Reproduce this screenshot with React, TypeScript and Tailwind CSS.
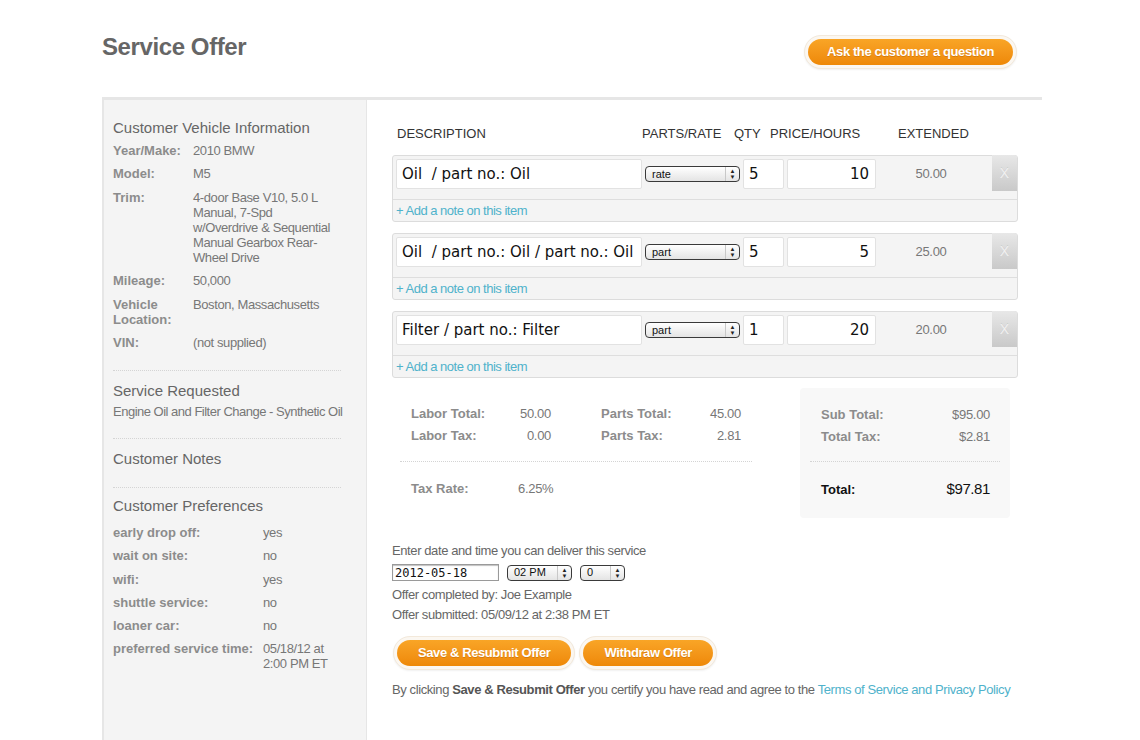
import React from 'react';

const font = { fontFamily: '"Liberation Sans", Arial, sans-serif' };
const inputFont = { fontFamily: '"DejaVu Sans", Verdana, sans-serif' };

const vehicleRows: { label: string; value: string[] }[] = [
  { label: 'Year/Make:', value: ['2010 BMW'] },
  { label: 'Model:', value: ['M5'] },
  { label: 'Trim:', value: ['4-door Base V10, 5.0 L', 'Manual, 7-Spd', 'w/Overdrive & Sequential', 'Manual Gearbox Rear-', 'Wheel Drive'] },
  { label: 'Mileage:', value: ['50,000'] },
  { label: 'Vehicle Location:', value: ['Boston, Massachusetts'] },
  { label: 'VIN:', value: ['(not supplied)'] },
];

const prefs: { label: string; value: string[] }[] = [
  { label: 'early drop off:', value: ['yes'] },
  { label: 'wait on site:', value: ['no'] },
  { label: 'wifi:', value: ['yes'] },
  { label: 'shuttle service:', value: ['no'] },
  { label: 'loaner car:', value: ['no'] },
  { label: 'preferred service time:', value: ['05/18/12 at', '2:00 PM ET'] },
];

const items = [
  { desc: 'Oil  / part no.: Oil', type: 'rate', qty: '5', price: '10', ext: '50.00' },
  { desc: 'Oil  / part no.: Oil / part no.: Oil', type: 'part', qty: '5', price: '5', ext: '25.00' },
  { desc: 'Filter / part no.: Filter', type: 'part', qty: '1', price: '20', ext: '20.00' },
];

const OrangeButton: React.FC<{ label: string; className?: string; pad?: string }> = ({ label, className = '', pad = 'px-[19px]' }) => (
  <div className={`inline-flex rounded-full bg-[#fbf7f1] p-[3px] border border-[#f3e9db] shadow-[0_1px_2px_rgba(0,0,0,0.06)] ${className}`}>
    <button
      className={`h-[26px] rounded-full bg-gradient-to-b from-[#f9a526] to-[#ee8806] ${pad} text-[13px] font-bold tracking-[-0.4px] text-white [text-shadow:0_1px_0_rgba(160,80,0,0.35)]`}
      style={font}
    >
      {label}
    </button>
  </div>
);

const MacSelect: React.FC<{ value: string; width: string }> = ({ value, width }) => (
  <div
    className={`flex h-[16px] items-center rounded-[4px] border border-[#3a3a3a] bg-gradient-to-b from-white to-[#e4e4e4] ${width}`}
  >
    <span className="flex-1 pl-[6px] text-[11px] leading-none text-[#111]">{value}</span>
    <span className="flex h-full w-[14px] flex-col items-center justify-center border-l border-[#c8c8c8] text-[6px] leading-[6px] text-[#222]">
      <span>▲</span>
      <span>▼</span>
    </span>
  </div>
);

const InfoRow: React.FC<{ label: string; value: string[]; labelWidth: string }> = ({ label, value, labelWidth }) => (
  <div className="flex text-[13px] leading-[15px]">
    <div className={`${labelWidth} shrink-0 pr-2 font-bold text-[#8c8c8c]`}>{label}</div>
    <div className="tracking-[-0.4px] text-[#777]">
      {value.map((v) => (
        <div key={v}>{v}</div>
      ))}
    </div>
  </div>
);

const Dotted: React.FC<{ className?: string }> = ({ className = '' }) => (
  <div className={`border-t border-dotted border-[#d4d4d4] ${className}`} />
);

export default function App() {
  return (
    <div className="h-[740px] w-full overflow-hidden bg-white" style={font}>
      <div className="ml-[102px] w-[940px]">
        {/* Header */}
        <div className="flex h-[97px] items-start justify-between">
          <h1 className="mt-[33px] text-[24px] font-bold leading-[28px] tracking-[-0.4px] text-[#666]">Service Offer</h1>
          <OrangeButton label="Ask the customer a question" className="mr-[25px] mt-[35px]" />
        </div>

        <div className="flex h-[643px] border-t-[3px] border-[#e6e6e6]">
          {/* Sidebar */}
          <aside className="w-[265px] shrink-0 border-l-2 border-r border-[#e6e6e6] bg-[#f4f4f4] pl-[9px] pr-[25px] pt-[18px]">
            <h2 className="text-[15px] leading-[20px] text-[#666]">Customer Vehicle Information</h2>
            <div className="mt-[5px] flex flex-col gap-[8.4px]">
              {vehicleRows.map((r) => (
                <InfoRow key={r.label} label={r.label} value={r.value} labelWidth="w-[80px]" />
              ))}
            </div>
            <Dotted className="mt-[20px]" />
            <h2 className="mt-[10px] text-[15px] leading-[20px] text-[#666]">Service Requested</h2>
            <div className="mt-[3px] whitespace-nowrap text-[13px] leading-[15px] tracking-[-0.5px] text-[#777]">
              Engine Oil and Filter Change - Synthetic Oil
            </div>
            <Dotted className="mt-[19px]" />
            <h2 className="mt-[10px] text-[15px] leading-[20px] text-[#666]">Customer Notes</h2>
            <Dotted className="mt-[18px]" />
            <h2 className="mt-[8px] text-[15px] leading-[20px] text-[#666]">Customer Preferences</h2>
            <div className="mt-[9px] flex flex-col gap-[8.3px]">
              {prefs.map((r) => (
                <InfoRow key={r.label} label={r.label} value={r.value} labelWidth="w-[150px]" />
              ))}
            </div>
          </aside>

          {/* Main */}
          <main className="flex-1 pl-[25px] pr-[24px] pt-[26px]">
            <div className="flex text-[13px] leading-[16px] text-[#333]">
              <span className="w-[250px] pl-[5px]">DESCRIPTION</span>
              <span className="w-[92px]">PARTS/RATE</span>
              <span className="w-[36px]">QTY</span>
              <span className="w-[128px]">PRICE/HOURS</span>
              <span>EXTENDED</span>
            </div>

            <div className="mt-[13px] flex flex-col gap-[11px]">
              {items.map((it, i) => (
                <div key={i} className="h-[67px] rounded-[3px] border border-[#dcdcdc] bg-[#f4f4f4]">
                  <div className="flex h-[44px] items-start border-b border-[#dedede]">
                    <div
                      className="ml-[3px] mt-[3px] flex h-[30px] w-[246px] items-center overflow-hidden whitespace-pre rounded-[2px] border border-[#e2e2e2] bg-white pl-[5px] text-[15px] text-[#111]"
                      style={inputFont}
                    >
                      {it.desc}
                    </div>
                    <div className="ml-[3px] mt-[10px]">
                      <MacSelect value={it.type} width="w-[95px]" />
                    </div>
                    <div
                      className="ml-[3px] mt-[3px] flex h-[30px] w-[41px] items-center rounded-[2px] border border-[#e2e2e2] bg-white pl-[5px] text-[15px] text-[#111]"
                      style={inputFont}
                    >
                      {it.qty}
                    </div>
                    <div
                      className="ml-[3px] mt-[3px] flex h-[30px] w-[89px] items-center justify-end rounded-[2px] border border-[#e2e2e2] bg-white pr-[6px] text-[15px] text-[#111]"
                      style={inputFont}
                    >
                      {it.price}
                    </div>
                    <div className="flex h-[36px] flex-1 items-center justify-center pr-[6px] text-[13px] tracking-[-0.3px] text-[#777]">
                      {it.ext}
                    </div>
                    <div className="-mt-px flex h-[36px] w-[25px] items-center justify-center rounded-tr-[3px] bg-gradient-to-b from-[#e8e8e8] to-[#c9c9c9] text-[14px] font-light text-[#f0f0f0] [text-shadow:0_-1px_0_rgba(0,0,0,0.08)]">
                      X
                    </div>
                  </div>
                  <div className="flex h-[22px] items-center pl-[3px] text-[13px] tracking-[-0.5px] text-[#4fb2cb]">
                    + Add a note on this item
                  </div>
                </div>
              ))}
            </div>

            {/* Totals */}
            <div className="mt-[10px] flex">
              <div className="ml-[8px] w-[352px] pt-[18px]">
                <div className="flex flex-col gap-[6px] pl-[11px]">
                  {[
                    ['Labor Total:', '50.00', 'Parts Total:', '45.00'],
                    ['Labor Tax:', '0.00', 'Parts Tax:', '2.81'],
                  ].map((r) => (
                    <div key={r[0]} className="flex text-[13px] leading-[16px]">
                      <span className="w-[90px] font-bold text-[#8c8c8c]">{r[0]}</span>
                      <span className="w-[50px] text-right tracking-[-0.3px] text-[#777]">{r[1]}</span>
                      <span className="ml-[50px] w-[90px] font-bold text-[#8c8c8c]">{r[2]}</span>
                      <span className="w-[50px] text-right tracking-[-0.3px] text-[#777]">{r[3]}</span>
                    </div>
                  ))}
                </div>
                <Dotted className="mt-[17px]" />
                <div className="mt-[19px] flex pl-[11px] text-[13px] leading-[16px]">
                  <span className="w-[107px] font-bold text-[#8c8c8c]">Tax Rate:</span>
                  <span className="tracking-[-0.3px] text-[#777]">6.25%</span>
                </div>
              </div>

              <div className="ml-[48px] h-[130px] w-[210px] rounded-[4px] bg-[#f8f8f8] px-[10px] pt-[19px]">
                <div className="flex flex-col gap-[6px] pl-[11px] pr-[10px]">
                  {[
                    ['Sub Total:', '$95.00'],
                    ['Total Tax:', '$2.81'],
                  ].map((r) => (
                    <div key={r[0]} className="flex justify-between text-[13px] leading-[16px]">
                      <span className="font-bold text-[#8c8c8c]">{r[0]}</span>
                      <span className="tracking-[-0.3px] text-[#777]">{r[1]}</span>
                    </div>
                  ))}
                </div>
                <Dotted className="mt-[16px]" />
                <div className="mt-[16px] flex items-center justify-between pl-[11px] pr-[10px]">
                  <span className="text-[13px] font-bold text-[#111]">Total:</span>
                  <span className="text-[15px] tracking-[-0.4px] text-[#111]">$97.81</span>
                </div>
              </div>
            </div>

            {/* Delivery */}
            <div className="mt-[25px] text-[13px] leading-[16px] tracking-[-0.4px] text-[#666]">
              Enter date and time you can deliver this service
            </div>
            <div className="mt-[5px] flex items-center">
              <div
                className="flex h-[17px] w-[107px] items-center border border-[#9a9a9a] bg-white pl-[2px] text-[12px] text-[#111] shadow-[inset_0_1px_1px_rgba(0,0,0,0.25)]"
                style={{ fontFamily: '"DejaVu Sans Mono", monospace' }}
              >
                2012-05-18
              </div>
              <div className="ml-[8px]">
                <MacSelect value="02 PM" width="w-[65px]" />
              </div>
              <div className="ml-[8px]">
                <MacSelect value="0" width="w-[45px]" />
              </div>
            </div>
            <div className="mt-[4px] text-[13px] leading-[20px] tracking-[-0.4px] text-[#666]">
              <div>Offer completed by: Joe Example</div>
              <div>Offer submitted: 05/09/12 at 2:38 PM ET</div>
            </div>
            <div className="mt-[11px] flex gap-[4px] pl-[1px]">
              <OrangeButton label="Save & Resubmit Offer" pad="px-[21px]" />
              <OrangeButton label="Withdraw Offer" pad="px-[21px]" />
            </div>
            <div className="mt-[12px] text-[13px] leading-[16px] tracking-[-0.4px] text-[#666]">
              By clicking <span className="font-bold text-[#555]">Save &amp; Resubmit Offer</span> you certify you have read
              and agree to the <a className="text-[#4fb2cb]">Terms of Service and Privacy Policy</a>
            </div>
          </main>
        </div>
      </div>
    </div>
  );
}
